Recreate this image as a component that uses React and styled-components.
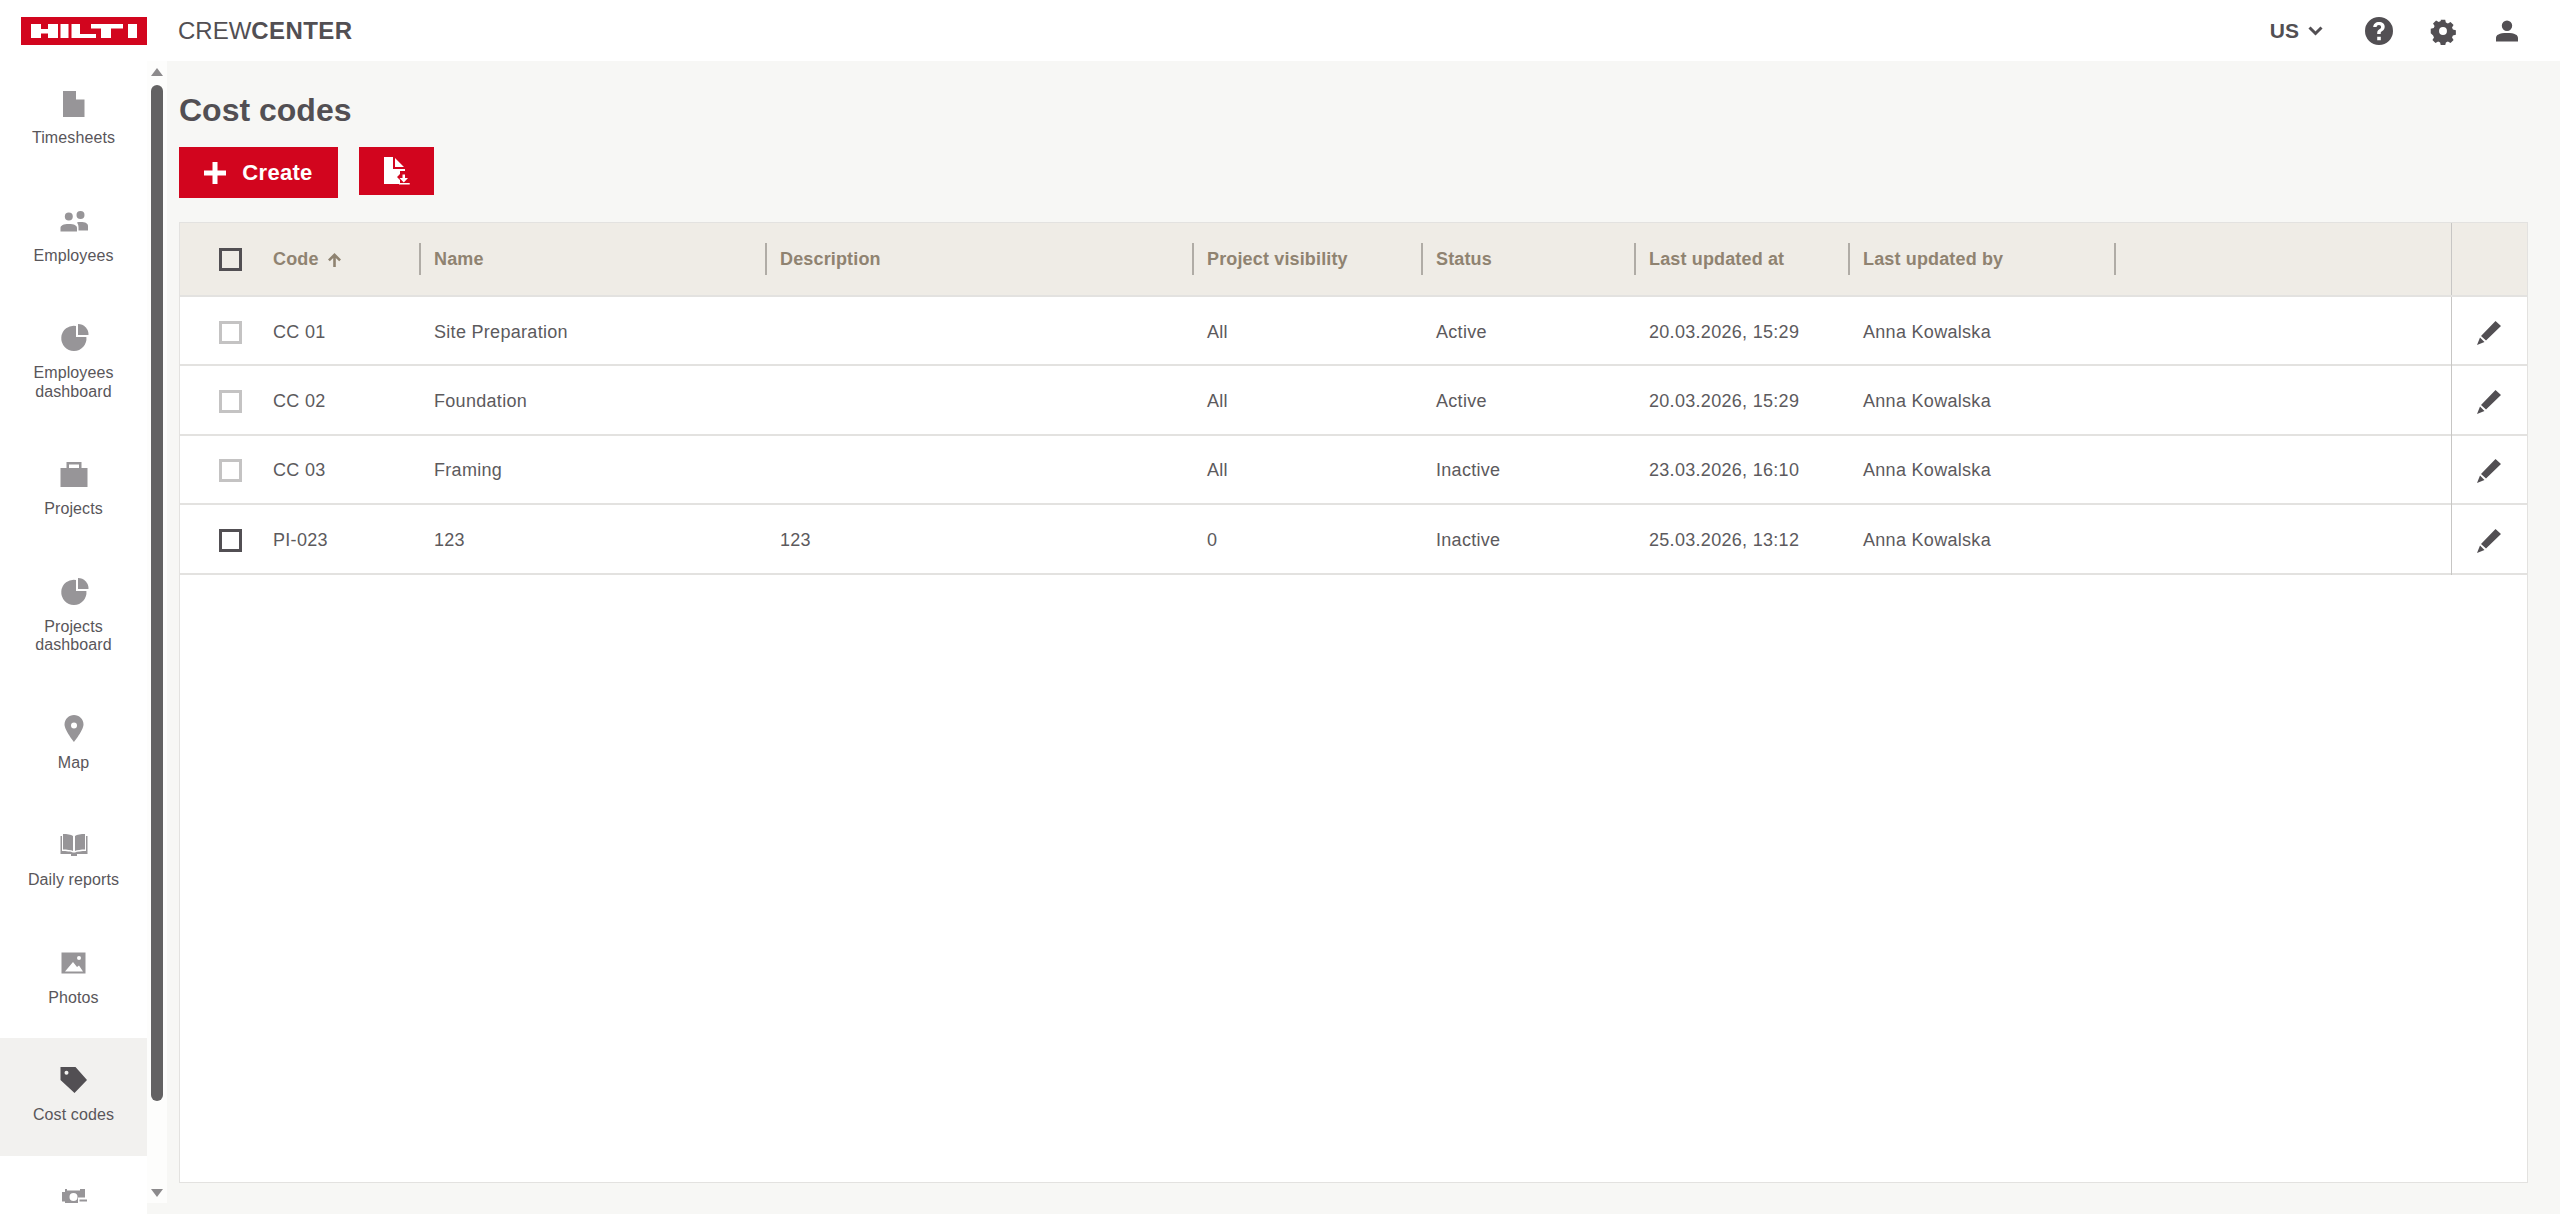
import React from 'react';
import styled, { createGlobalStyle } from 'styled-components';

const GlobalStyle = createGlobalStyle`
  html, body { margin: 0; padding: 0; height: 100%; background: #fff; overflow: hidden; }
  body { font-family: 'Liberation Sans', Arial, sans-serif; color: #524f53; }
`;

const Page = styled.div`
  display: flex;
  flex-direction: column;
  height: 100vh;
`;

const TopBar = styled.header`
  display: flex;
  align-items: center;
  flex: 0 0 61px;
  height: 61px;
  padding: 0 39px 0 21px;
  background: #fff;
`;

const Logo = styled.div`
  display: flex;
  width: 126px;
  height: 28px;
`;

const Brand = styled.div`
  margin-left: 31px;
  font-size: 24px;
  color: #524f53;
  b { font-weight: 700; letter-spacing: 0.4px; }
`;

const TopActions = styled.div`
  display: flex;
  align-items: center;
  margin-left: auto;
`;

const Lang = styled.div`
  display: flex;
  align-items: center;
  gap: 9px;
  margin-right: 42px;
  font-size: 21px;
  font-weight: 700;
`;

const TopIcon = styled.svg`
  display: block;
  width: 28px;
  height: 28px;
  margin-left: ${(p) => p.$gap || 0}px;
  fill: #524f53;
`;

const Body = styled.div`
  display: flex;
  flex: 1;
  min-height: 0;
  background: #f7f7f5;
`;

const Sidebar = styled.nav`
  flex: 0 0 147px;
  background: #fff;
`;

const NavList = styled.div`
  height: 1142px;
  overflow: hidden;
`;

const NavItem = styled.div`
  display: flex;
  flex-direction: column;
  align-items: center;
  height: ${(p) => (p.$double ? 136 : 117.5)}px;
  padding-top: 29px;
  box-sizing: border-box;
  background: ${(p) => (p.$active ? '#f2f1ef' : 'transparent')};
`;

const NavIcon = styled.svg`
  display: block;
  width: 28px;
  height: 28px;
  flex: none;
  overflow: visible;
  fill: ${(p) => (p.$active ? '#524f53' : '#979598')};
`;

const NavLabel = styled.span`
  margin-top: 11px;
  font-size: 16px;
  line-height: 18.6px;
  letter-spacing: 0.1px;
  text-align: center;
  color: #59565a;
`;

const ScrollColumn = styled.div`
  flex: 0 0 20px;
  display: flex;
  flex-direction: column;
  align-items: center;
  height: 1142px;
  background: #fdfdfc;
`;

const Arrow = styled.div`
  flex: none;
  width: 0;
  height: 0;
  margin-top: ${(p) => (p.$down ? 'auto' : '7px')};
  margin-bottom: ${(p) => (p.$down ? '6px' : 0)};
  border-left: 6px solid transparent;
  border-right: 6px solid transparent;
  border-${(p) => (p.$down ? 'top' : 'bottom')}: 8px solid #8c8a8c;
`;

const Thumb = styled.div`
  flex: none;
  width: 12px;
  height: 1016px;
  margin-top: 9px;
  border-radius: 6px;
  background: #636263;
`;

const Main = styled.main`
  flex: 1;
  min-width: 0;
  display: flex;
  flex-direction: column;
  padding: 30px 32px 31px 12px;
  background: #f7f7f5;
`;

const Title = styled.h1`
  margin: 0;
  font-size: 32px;
  line-height: 38px;
  font-weight: 700;
  color: #524f53;
`;

const Toolbar = styled.div`
  display: flex;
  align-items: flex-start;
  gap: 21px;
  margin-top: 18px;
`;

const RedButton = styled.button`
  display: flex;
  align-items: center;
  justify-content: center;
  gap: 16px;
  width: ${(p) => p.$w}px;
  height: ${(p) => p.$h}px;
  padding: 0;
  border: 0;
  background: #d2051e;
  color: #fff;
  font: 700 22px 'Liberation Sans', Arial, sans-serif;
  letter-spacing: 0.3px;
`;

const TableCard = styled.div`
  flex: 1;
  margin-top: 24px;
  border: 1px solid #e3e2e0;
  background: #fff;
  min-height: 0;
`;

const columns = '80px 161px 346px 427px 229px 213px 214px 266px 1fr 76px';

const HeaderRow = styled.div`
  display: grid;
  grid-template-columns: ${columns};
  align-items: center;
  height: 74px;
  box-sizing: border-box;
  background: #efece6;
  border-bottom: 2px solid #e3e2e0;
`;

const Row = styled.div`
  display: grid;
  grid-template-columns: ${columns};
  align-items: center;
  height: 69.4px;
  padding-top: 3px;
  box-sizing: border-box;
  border-bottom: 2px solid #e3e2e0;
`;

const CheckCell = styled.div`
  display: flex;
  padding-left: 39px;
`;

const Check = styled.span`
  display: block;
  box-sizing: border-box;
  width: 23px;
  height: 23px;
  border: 3px solid ${(p) => (p.$muted ? '#c4c3c3' : '#524f53')};
  background: ${(p) => (p.$head ? 'transparent' : '#fff')};
`;

const HeadCell = styled.div`
  display: flex;
  align-items: center;
  gap: 8px;
  height: 32px;
  padding: 1px 0 0 13px;
  box-sizing: border-box;
  font-size: 18px;
  font-weight: 700;
  letter-spacing: 0.15px;
  color: #8f8371;
  border-right: 2px solid #b0aca6;
`;

const Cell = styled.div`
  padding-left: 13px;
  font-size: 18px;
  letter-spacing: 0.3px;
  color: #5c5a5d;
  white-space: nowrap;
`;

const ActionCell = styled.div`
  align-self: stretch;
  display: flex;
  align-items: center;
  justify-content: center;
  border-left: 1px solid #c7c6c4;
  margin-top: ${(p) => (p.$head ? 0 : -3)}px;
  margin-bottom: ${(p) => (p.$head ? 0 : -2)}px;
  padding-top: ${(p) => (p.$head ? 0 : 2)}px;
`;

const PencilIcon = styled.svg`
  display: block;
  width: 24px;
  height: 24px;
  margin-left: -2px;
  fill: #524f53;
`;

const pie = (
  <>
    <path d="M16 .9V12H26.400A12.600 12.600 0 1 1 16 .9z" />
    <path d="M18-1A10.500 10.500 0 0 1 28.500 10H18z" />
  </>
);

const nav = [
  { lines: ['Timesheets'], icon: <path d="M3 1H16V9.500H24.500V27H3z" /> },
  {
    lines: ['Employees'],
    icon: (
      <path d="M8.800 4.500a4 4 0 1 1 0 8 4 4 0 0 1 0-8zM20.500 3a4 4 0 1 1 0 8 4 4 0 0 1 0-8zM.5 23.500V20c0-2.500 3-4 8.300-4s8.200 1.500 8.200 4v3.500zM17 14.500c1-.5 2.200-.5 3.500-.5 5 0 7.500 1.500 7.500 4v4.500H18.500V19.500c0-2-.5-3.500-1.500-5z" />
    ),
  },
  { lines: ['Employees', 'dashboard'], icon: pie },
  {
    lines: ['Projects'],
    icon: <path d="M6.500 1h15v6h-2.500V3.500h-10V7H6.500zM.5 7h27v19H.5z" />,
  },
  { lines: ['Projects', 'dashboard'], icon: pie },
  {
    lines: ['Map'],
    icon: (
      <path
        fillRule="evenodd"
        d="M14 0C19 0 23.500 4 23.500 9.500 23.500 15 14 27 14 27S4.500 15 4.500 9.500C4.500 4 9 0 14 0zm0 7.500a3 3 0 1 0 0 6 3 3 0 0 0 0-6z"
      />
    ),
  },
  {
    lines: ['Daily reports'],
    icon: (
      <path d="M3 2c4 0 8 .5 10 2v15c-2-1-6-1.500-10-1.500zM25 2c-4 0-8 .5-10 2v15c2-1 6-1.500 10-1.500zM.5 4H2V19c4 0 9 .5 11 1.500h2C17 19.500 22 19 26 19V4h1.500V22H17v2h-6v-2H.5z" />
    ),
  },
  {
    lines: ['Photos'],
    icon: (
      <path
        fillRule="evenodd"
        d="M1.500 2.500h24v21h-24zM19 6a2 2 0 1 0 0 4 2 2 0 0 0 0-4zM5 21.500L13 12l4 5 2-1.500 4 6z"
      />
    ),
  },
  {
    lines: ['Cost codes'],
    active: true,
    icon: (
      <path
        fillRule="evenodd"
        d="M.5 0H15.500L27 13 14.500 26 .5 13zM6.500 3.700a2 2 0 1 0 0 4 2 2 0 0 0 0-4z"
      />
    ),
  },
  {
    lines: [],
    icon: (
      <>
        <path
          fillRule="evenodd"
          d="M5 4h2v1.500h13V4h5v8.500h-7V19H5v-2.500H2V7H5zM13.500 8a4 4 0 1 0 0 8 4 4 0 0 0 0-8z"
        />
        <path d="M19.500 14.500H27v2h-7.500z" />
      </>
    ),
  },
];

const rows = [
  { code: 'CC 01', name: 'Site Preparation', desc: '', vis: 'All', status: 'Active', at: '20.03.2026, 15:29', muted: true },
  { code: 'CC 02', name: 'Foundation', desc: '', vis: 'All', status: 'Active', at: '20.03.2026, 15:29', muted: true },
  { code: 'CC 03', name: 'Framing', desc: '', vis: 'All', status: 'Inactive', at: '23.03.2026, 16:10', muted: true },
  { code: 'PI-023', name: '123', desc: '123', vis: '0', status: 'Inactive', at: '25.03.2026, 13:12', muted: false },
];

function HiltiLogo() {
  return (
    <Logo>
      <svg width="126" height="28" viewBox="0 0 126 28">
        <rect width="126" height="28" fill="#d2051e" />
        <path
          fill="#fff"
          d="M10 7H20V12H27V7H37V21H27V16.500H20V21H10zM39.500 7H47.500V21H39.500zM50.500 7H59V17H75V21H50.500zM70 7H102V11.500H90V21H80V11.500H70zM107 7H116V21H107z"
        />
      </svg>
    </Logo>
  );
}

export default function App() {
  return (
    <Page>
      <GlobalStyle />
      <TopBar>
        <HiltiLogo />
        <Brand>
          CREW<b>CENTER</b>
        </Brand>
        <TopActions>
          <Lang>
            US
            <svg width="15" height="10" viewBox="0 0 15 10">
              <path d="M1.500 1.500l6 6 6-6" fill="none" stroke="#524f53" strokeWidth="3" />
            </svg>
          </Lang>
          <TopIcon viewBox="0 0 28 28">
            <path
              fillRule="evenodd"
              d="M14 0a14 14 0 1 1 0 28 14 14 0 0 1 0-28zm-1.800 19.800v3.400h3.600v-3.400zM14 5c-3.400 0-5.600 2-5.800 5h3.400c.1-1.200 1-2 2.300-2 1.300 0 2.200.8 2.200 1.900 0 1-.5 1.500-1.700 2.300-1.500 1-2.200 2-2.200 3.800v.9h3.500v-.7c0-1 .4-1.400 1.600-2.200 1.500-1 2.400-2.300 2.400-4.200C19.700 6.900 17.500 5 14 5z"
            />
          </TopIcon>
          <TopIcon viewBox="-2 -2 32 32" $gap={36}>
            <path
              fillRule="evenodd"
              d="M11.500 1h5l.8 3.400 2.300 1 3-1.800 3.500 3.500-1.800 3 1 2.300 3.400.8v5l-3.400.8-1 2.300 1.800 3-3.500 3.500-3-1.800-2.300 1-.8 3.400h-5l-.8-3.400-2.300-1-3 1.800-3.500-3.500 1.800-3-1-2.300L0 16.500v-5l3.400-.8 1-2.300-1.800-3 3.500-3.500 3 1.800 2.300-1zM14 9.500a4.500 4.500 0 1 0 0 9 4.500 4.500 0 0 0 0-9z"
            />
          </TopIcon>
          <TopIcon viewBox="0 0 28 28" $gap={36}>
            <path d="M14 3.500a5.200 5.200 0 1 1 0 10.400 5.200 5.200 0 0 1 0-10.400zM3 24.500V21c0-3 3-5 11-5s11 2 11 5v3.500z" />
          </TopIcon>
        </TopActions>
      </TopBar>
      <Body>
        <Sidebar>
          <NavList>
            {nav.map((item, i) => (
              <NavItem key={i} $double={item.lines.length === 2} $active={item.active}>
                <NavIcon viewBox="0 0 28 28" $active={item.active}>
                  {item.icon}
                </NavIcon>
                <NavLabel>
                  {item.lines.map((line) => (
                    <React.Fragment key={line}>
                      {line}
                      <br />
                    </React.Fragment>
                  ))}
                </NavLabel>
              </NavItem>
            ))}
          </NavList>
        </Sidebar>
        <ScrollColumn>
          <Arrow />
          <Thumb />
          <Arrow $down />
        </ScrollColumn>
        <Main>
          <Title>Cost codes</Title>
          <Toolbar>
            <RedButton $w={159} $h={51}>
              <svg width="22" height="22" viewBox="0 0 22 22">
                <path fill="#fff" d="M8.500 0h5v8.500H22v5h-8.500V22h-5v-8.500H0v-5h8.500z" />
              </svg>
              Create
            </RedButton>
            <RedButton $w={75} $h={48}>
              <svg width="26" height="28" viewBox="0 0 26 28">
                <path fill="#fff" d="M0 0h9v12h12v2h-5v3l-3 3 3 3v4H0zM11 1l9 9h-9z" />
                <path fill="#fff" d="M18.500 17.500H21V21h3l-4.200 4.500L15.500 21h3zM15 26h10.700v1.500H15z" />
              </svg>
            </RedButton>
          </Toolbar>
          <TableCard>
            <HeaderRow>
              <CheckCell>
                <Check $head />
              </CheckCell>
              <HeadCell>
                Code
                <svg width="15" height="14" viewBox="0 0 15 14">
                  <path fill="#8f8371" d="M7.500 0l6.500 6.500-1.800 1.800L8.800 5v9H6.200V5L2.800 8.300 1 6.500z" />
                </svg>
              </HeadCell>
              <HeadCell>Name</HeadCell>
              <HeadCell>Description</HeadCell>
              <HeadCell>Project visibility</HeadCell>
              <HeadCell>Status</HeadCell>
              <HeadCell>Last updated at</HeadCell>
              <HeadCell>Last updated by</HeadCell>
              <div />
              <ActionCell $head />
            </HeaderRow>
            {rows.map((r) => (
              <Row key={r.code}>
                <CheckCell>
                  <Check $muted={r.muted} />
                </CheckCell>
                <Cell>{r.code}</Cell>
                <Cell>{r.name}</Cell>
                <Cell>{r.desc}</Cell>
                <Cell>{r.vis}</Cell>
                <Cell>{r.status}</Cell>
                <Cell>{r.at}</Cell>
                <Cell>Anna Kowalska</Cell>
                <div />
                <ActionCell>
                  <PencilIcon viewBox="0 0 24 24">
                    <path d="M18.500 0L24 5 9 19.500 4 15zM3 16.500L7.500 21 0 24z" />
                  </PencilIcon>
                </ActionCell>
              </Row>
            ))}
          </TableCard>
        </Main>
      </Body>
    </Page>
  );
}
